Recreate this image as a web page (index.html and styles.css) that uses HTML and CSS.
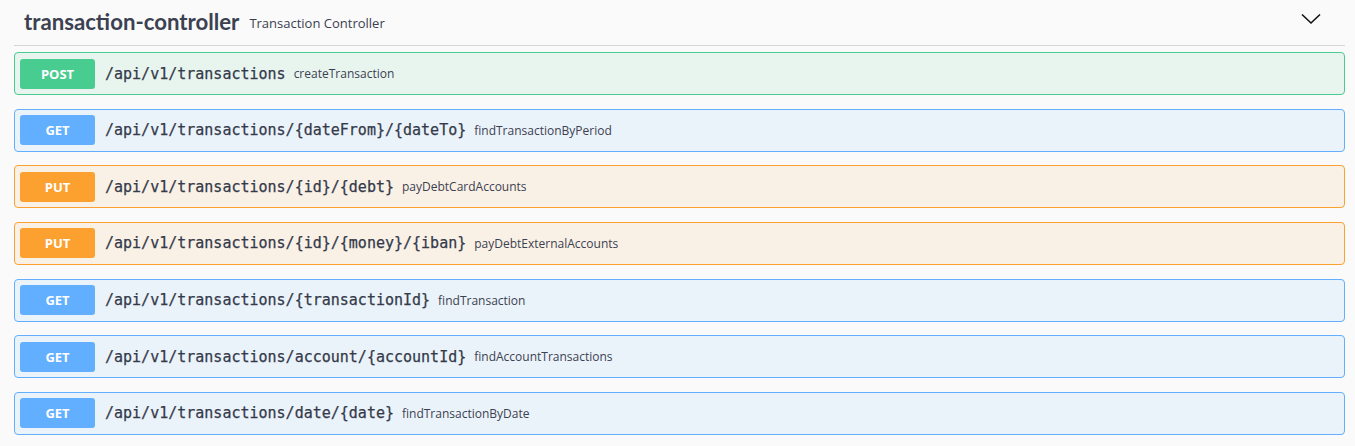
FILE: index.html
```html
<!DOCTYPE html>
<html lang="en">
<head>
<meta charset="utf-8">
<title>transaction-controller</title>
<link rel="stylesheet" href="styles.css">
</head>
<body>
<div class="section">
  <div class="tag">
    <span class="tag-name">transaction-controller</span>
    <span class="tag-desc">Transaction Controller</span>
    <svg class="chevron" width="20" height="12" viewBox="0 0 20 12"><path d="M1 1.5 L10 10 L19 1.5" fill="none" stroke="#111" stroke-width="1.6"/></svg>
  </div>
  <div class="ops">
    <div class="op post"><span class="method">POST</span><span class="path">/api/v1/transactions</span><span class="desc">createTransaction</span></div>
    <div class="op get"><span class="method">GET</span><span class="path">/api/v1/transactions/{dateFrom}/{dateTo}</span><span class="desc">findTransactionByPeriod</span></div>
    <div class="op put"><span class="method">PUT</span><span class="path">/api/v1/transactions/{id}/{debt}</span><span class="desc">payDebtCardAccounts</span></div>
    <div class="op put"><span class="method">PUT</span><span class="path">/api/v1/transactions/{id}/{money}/{iban}</span><span class="desc">payDebtExternalAccounts</span></div>
    <div class="op get"><span class="method">GET</span><span class="path">/api/v1/transactions/{transactionId}</span><span class="desc">findTransaction</span></div>
    <div class="op get"><span class="method">GET</span><span class="path">/api/v1/transactions/account/{accountId}</span><span class="desc">findAccountTransactions</span></div>
    <div class="op get"><span class="method">GET</span><span class="path">/api/v1/transactions/date/{date}</span><span class="desc">findTransactionByDate</span></div>
  </div>
</div>
</body>
</html>
```
FILE: styles.css
```css
html, body {
  margin: 0;
  padding: 0;
  background: #fafafa;
  color: #3b4151;
}
.section {
  padding: 0 10px 0 14px;
}
.tag {
  display: flex;
  align-items: center;
  height: 46px;
  box-sizing: border-box;
  padding: 0 24px 0 10px;
  border-bottom: 1px solid #d4d6da;
}
.tag-name {
  font-family: "Lato", "Liberation Sans", sans-serif;
  font-weight: 700;
  font-size: 22.2px;
  color: #3b4151;
  margin-top: -3px;
}
.tag-desc {
  font-family: "Open Sans", "Liberation Sans", sans-serif;
  font-size: 13px;
  color: #3b4151;
  margin-left: 10px;
  flex: 1;
}
.chevron {
  margin-top: -7px;
}
.ops {
  padding-top: 6px;
}
.op {
  display: flex;
  align-items: center;
  height: 43px;
  box-sizing: border-box;
  padding: 0 5px;
  border: 1px solid;
  border-radius: 4px;
  margin-bottom: 13.67px;
}
.method {
  width: 75px;
  height: 30px;
  border-radius: 3px;
  display: flex;
  align-items: center;
  justify-content: center;
  color: #fff;
  font-family: "Open Sans", "Liberation Sans", sans-serif;
  font-weight: 700;
  font-size: 13px;
  flex: none;
}
.path {
  font-family: "DejaVu Sans Mono", "Liberation Mono", monospace;
  font-size: 15px;
  color: #343a4a;
  margin-left: 10px;
  -webkit-text-stroke: 0.25px #343a4a;
}
.desc {
  font-family: "Open Sans", "Liberation Sans", sans-serif;
  font-size: 12px;
  color: #3b4151;
  margin-left: 8px;
}
.post { background: #e8f5ef; border-color: #49cc90; }
.post .method { background: #49cc90; }
.get { background: #ebf3fa; border-color: #61affe; }
.get .method { background: #61affe; }
.put { background: #faf1e6; border-color: #fca130; }
.put .method { background: #fca130; }
```
